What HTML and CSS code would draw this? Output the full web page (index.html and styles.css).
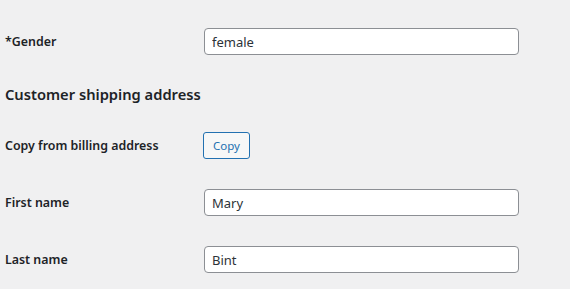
FILE: index.html
```html
<!DOCTYPE html>
<html>
<head>
    <title>Edit User</title>
    <link rel="stylesheet" href="styles.css">
</head>
<body>
    <table class="form-table">
        <tr>
            <th><label for="gender">*Gender</label></th>
            <td><input type="text" id="gender" class="regular-text" value="female"></td>
        </tr>
    </table>

    <h2>Customer shipping address</h2>

    <table class="form-table">
        <tr>
            <th><label>Copy from billing address</label></th>
            <td><button type="button" class="button">Copy</button></td>
        </tr>
        <tr>
            <th><label for="shipping_first_name">First name</label></th>
            <td><input type="text" id="shipping_first_name" class="regular-text" value="Mary"></td>
        </tr>
        <tr>
            <th><label for="shipping_last_name">Last name</label></th>
            <td><input type="text" id="shipping_last_name" class="regular-text" value="Bint"></td>
        </tr>
    </table>
</body>
</html>
```

FILE: styles.css
```css
body {
    font-family: "Noto Sans", "Open Sans", sans-serif;
    font-size: 13px;
    color: #1d2327;
    background-color: #f0f0f1;
    margin: 0;
    padding: 13px 0 0 5px;
}
.form-table {
    border-collapse: collapse;
    margin: 0;
}
.form-table th {
    width: 189px;
    padding: 21px 10px 0 0;
    text-align: left;
    vertical-align: top;
    font-size: 12.4px;
    font-weight: 600;
    line-height: 1.3;
}
.form-table td {
    padding: 15px 0 15px 0;
    vertical-align: top;
}
h2 {
    font-size: 14.7px;
    font-weight: 600;
    line-height: 22px;
    margin: 13px 0 12px 0;
}
.regular-text {
    width: 315px;
    height: 27px;
    box-sizing: border-box;
    padding: 0 7px;
    border: 1px solid #8c8f94;
    border-radius: 4px;
    background: #fff;
    color: #2c3338;
    font-family: inherit;
    font-size: 13px;
    display: block;
}
.button {
    display: block;
    height: 27px;
    margin-left: -1px;
    padding: 0 9px;
    border: 1px solid #2271b1;
    border-radius: 3px;
    background: #f6f7f7;
    color: #2271b1;
    font-family: inherit;
    font-size: 11.5px;
    cursor: pointer;
}
```
